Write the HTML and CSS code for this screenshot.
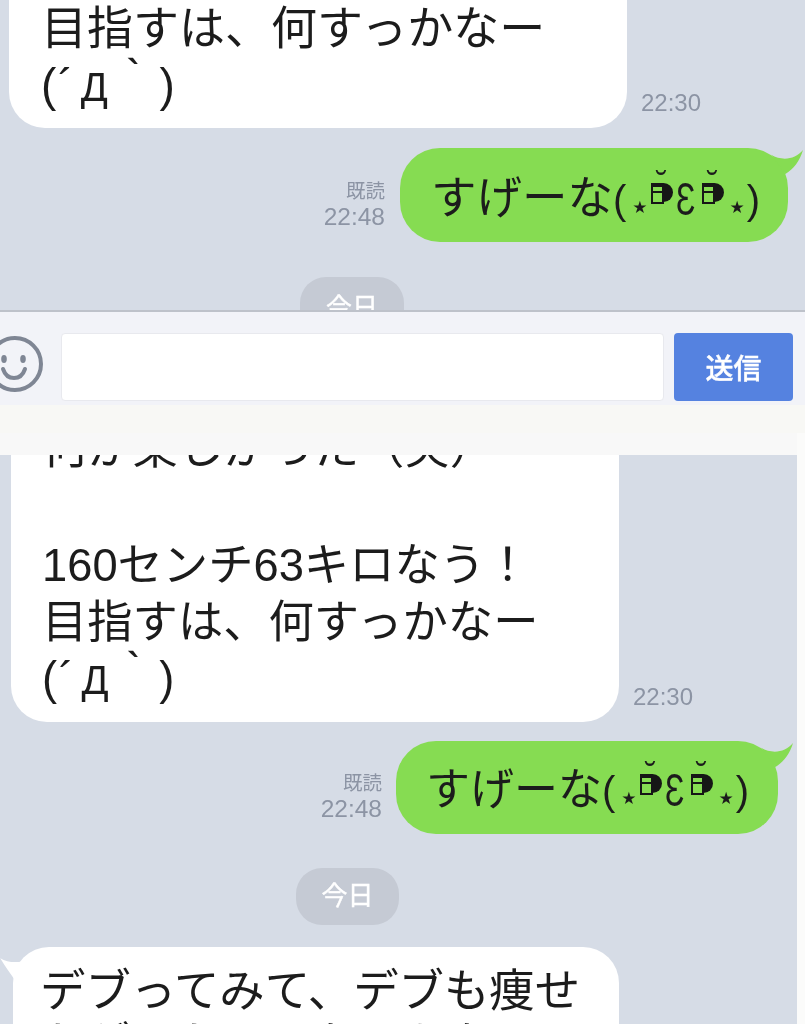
FILE: index.html
```html
<!DOCTYPE html>
<html lang="ja">
<head>
<meta charset="utf-8">
<title>トーク</title>
<link rel="stylesheet" href="styles.css">
</head>
<body>
<main class="page">
  <section class="chat chat-top">
    <div class="row row-in">
      <div class="bubble in in-top">
        <p class="line">目指すは、何すっかなー</p>
        <p class="line face">(´<span class="de">Д</span>｀)</p>
      </div>
      <time class="time">22:30</time>
    </div>
    <div class="row row-out">
      <div class="meta"><span class="read">既読</span><time class="time">22:48</time></div>
      <div class="bubble out out-top">
        <span class="kao">すげーな<span class="paren">(</span><span class="star">★</span><span class="eye">˘</span><span class="eps">Ɛ</span><span class="eye">˘</span><span class="star star-end">★</span><span class="paren">)</span></span>
        <svg class="tail-out" viewBox="0 0 40 30"><path d="M0 6C14 14 30 12 40 0 36 14 28 24 18 30Z"/></svg>
      </div>
    </div>
    <div class="day day-top">今日</div>
  </section>

  <section class="composer">
    <svg class="smile" viewBox="0 0 56 56">
      <circle cx="28" cy="28" r="26"/>
      <ellipse class="smile-eye" cx="17" cy="23" rx="2.8" ry="4"/>
      <ellipse class="smile-eye" cx="36" cy="23" rx="2.8" ry="4"/>
      <path d="M16 33C20 45 34 45 38 33"/>
    </svg>
    <div class="field"></div>
    <button class="send">送信</button>
  </section>
  <div class="strip"></div>

  <div class="lower-wrap">
    <div class="strip-short"></div>
    <section class="chat chat-low">
      <div class="row row-in">
        <div class="bubble in in-low">
          <p class="line">何か楽しかった（笑）</p>
          <p class="line blank">&nbsp;</p>
          <p class="line">160センチ63キロなう！</p>
          <p class="line">目指すは、何すっかなー</p>
          <p class="line face">(´<span class="de">Д</span>｀)</p>
        </div>
        <time class="time">22:30</time>
      </div>
      <div class="row row-out">
        <div class="meta"><span class="read">既読</span><time class="time">22:48</time></div>
        <div class="bubble out out-low">
          <span class="kao">すげーな<span class="paren">(</span><span class="star">★</span><span class="eye">˘</span><span class="eps">Ɛ</span><span class="eye">˘</span><span class="star star-end">★</span><span class="paren">)</span></span>
          <svg class="tail-out" viewBox="0 0 40 30"><path d="M0 6C14 14 30 12 40 0 36 14 28 24 18 30Z"/></svg>
        </div>
      </div>
      <div class="day day-low">今日</div>
      <div class="row row-in">
        <div class="bubble in in-last">
          <svg class="tail-in" viewBox="0 0 34 30"><path d="M34 6C24 12 10 12 0 6 6 16 12 24 16 30Z"/></svg>
          <p class="line">デブってみて、デブも痩せ</p>
          <p class="line">たがーためになるかな！</p>
        </div>
      </div>
    </section>
  </div>
</main>
</body>
</html>
```
FILE: styles.css
```css
* { box-sizing: border-box; }
html, body { margin: 0; padding: 0; }
body {
  width: 805px;
  height: 1024px;
  overflow: hidden;
  background: #f8f8f7;
  font-family: "Liberation Sans", "Noto Sans CJK JP", sans-serif;
  color: #1c1c1c;
}
.page { display: flex; flex-direction: column; height: 1024px; filter: blur(0.5px); }
p { margin: 0; }

.chat { background: #d6dce6; overflow: hidden; display: flex; flex-direction: column; }
.chat-top { height: 312px; border-bottom: 2px solid #bec2ca; flex: none; }
.chat-low { height: 569px; width: 797px; }
.lower-wrap { flex: 1; min-height: 0; background: #fbfbfa; }
.strip-short { height: 22px; width: 797px; background: #f8f8f8; }

.row { display: flex; align-items: flex-end; flex: none; }
.row-out { justify-content: flex-end; }

.bubble { position: relative; flex: none; }
.in { background: #fff; }
.out {
  background: #86dc52;
  display: flex;
  align-items: center;
}
.kao { display: block; height: 60px; line-height: 60px; white-space: nowrap; }
.out-top .kao { margin-top: 7px; }
.out-low .kao { margin-top: 4px; }

.line { line-height: 56.5px; white-space: nowrap; }
.face { letter-spacing: 1.6px; }
.de { font-size: 40px; margin: 0 4px 0 6px; letter-spacing: 0; }

.in-top {
  width: 618px;
  height: 170px;
  margin: -42px 0 0 9px;
  padding: 40px 0 0 32px;
  border-radius: 36px;
  font-size: 46px;
}
.in-top .line { line-height: 60px; }
.in-top .face { margin-top: -3px; }
.row-in .time { margin: 0 0 12px 14px; }

.out-top {
  width: 388px;
  height: 94px;
  margin: 20px 17px 0 15px;
  padding-left: 31px;
  border-radius: 40px;
  font-size: 45.5px;
}
.day {
  flex: none;
  background: #c5cad4;
  color: #fff;
  text-align: center;
  font-size: 26px;
  -webkit-text-stroke: 0.4px #fff;
}
.day-top {
  align-self: flex-start;
  width: 104px;
  height: 58px;
  margin: 35px 0 0 300px;
  padding-top: 14px;
  line-height: 34px;
  border-radius: 26px;
}

.time { color: #8c94a4; font-size: 24px; line-height: 26px; }
.meta { display: flex; flex-direction: column; align-items: flex-end; padding-bottom: 12px; }
.meta .time { font-size: 24.5px; }
.read { color: #8c94a4; font-size: 19.5px; line-height: 26px; }

.paren { font-size: 40px; }
.star {
  display: inline-block;
  font-size: 17px;
  line-height: 1;
  margin: 0 2px 0 6px;
  vertical-align: 1px;
  font-family: "DejaVu Sans", sans-serif;
}
.star-end { margin: 0 2px 0 3px; }
.eye {
  position: relative;
  display: inline-block;
  width: 22px;
  height: 19px;
  margin: 0 3px 0 1px;
  background: #161616;
  border-radius: 0 10px 10px 0;
  vertical-align: 20px;
  font-size: 32px;
  line-height: 0;
  text-align: center;
}
.eye::before {
  content: "";
  position: absolute;
  left: 0;
  top: 2px;
  width: 9px;
  height: 15px;
  border: 2px solid #161616;
  background: linear-gradient(#86dc52 0 4px, #161616 4px 6px, #86dc52 6px);
}
.eps {
  display: inline-block;
  width: 25px;
  font-size: 46px;
  line-height: 1;
  transform: scaleX(0.7);
  transform-origin: left center;
  vertical-align: -1px;
}

.tail-out { position: absolute; top: 2px; right: -15px; width: 32px; height: 24px; fill: #86dc52; }
.tail-in { position: absolute; top: 6px; left: -13px; width: 30px; height: 26px; fill: #fff; }

.composer {
  flex: none;
  height: 93px;
  background: #f2f3f8;
  display: flex;
  align-items: flex-start;
  padding: 21px 12px 0 0;
  overflow: hidden;
}
.smile {
  flex: none;
  width: 56px;
  height: 56px;
  margin: 3px 18px 0 -13px;
  fill: none;
  stroke: #7f8694;
  stroke-width: 4;
  stroke-linecap: round;
}
.smile-eye { fill: #7f8694; stroke: none; }
.field {
  flex: none;
  width: 603px;
  height: 68px;
  background: #fff;
  border: 1px solid #e8e9ee;
  border-radius: 4px;
}
.send {
  flex: none;
  width: 119px;
  height: 68px;
  margin-left: 10px;
  padding: 0;
  border: 0;
  border-radius: 4px;
  background: #5582e0;
  color: #fff;
  font: 500 28px "Noto Sans CJK JP", sans-serif;
  -webkit-text-stroke: 0.4px #fff;
}
.strip { flex: none; height: 28px; background: #f8f8f5; }

.in-low {
  width: 608px;
  height: 301px;
  margin: -34px 0 0 11px;
  padding: 0 0 0 31px;
  border-radius: 36px;
  font-size: 45.3px;
}
.blank { line-height: 60.5px; }

.out-low {
  width: 382px;
  height: 93px;
  margin: 19px 19px 0 14px;
  padding-left: 30px;
  border-radius: 40px;
  font-size: 44px;
}
.day-low {
  align-self: flex-start;
  width: 103px;
  height: 57px;
  margin: 34px 0 0 296px;
  line-height: 57px;
  border-radius: 26px;
}
.in-last {
  width: 606px;
  height: 140px;
  margin: 22px 0 0 13px;
  padding: 18px 0 0 27px;
  border-radius: 36px;
  font-size: 45.4px;
}
.in-last .line { line-height: 53px; }
```
